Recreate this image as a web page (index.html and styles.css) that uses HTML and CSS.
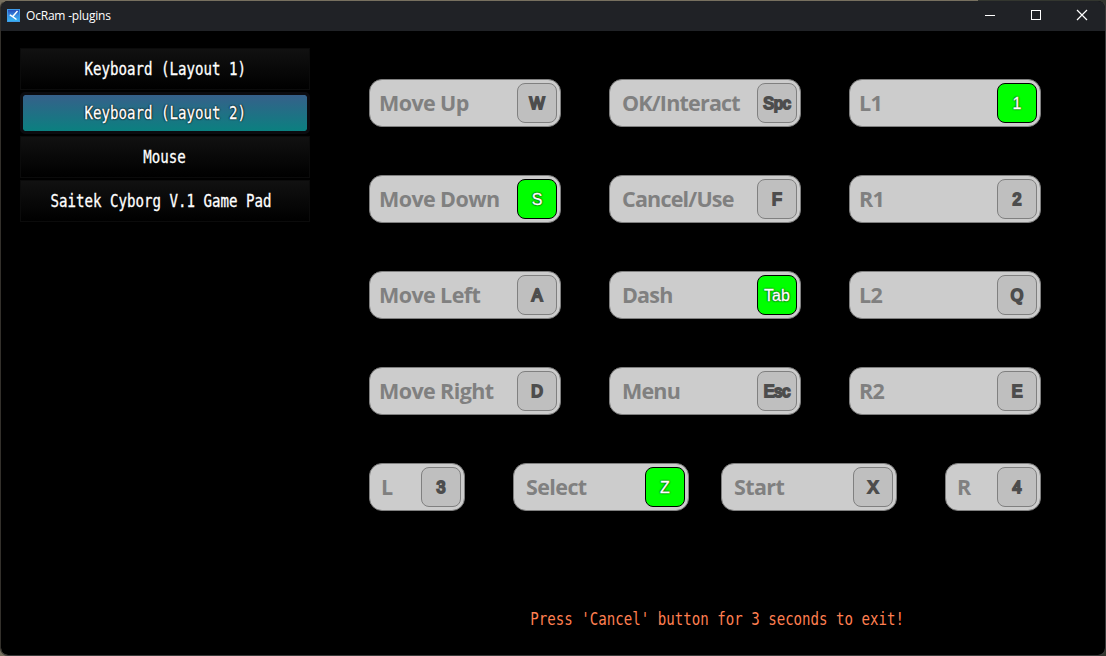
FILE: index.html
```
<!DOCTYPE html>
<html lang="en">
<head>
  <meta charset="UTF-8">
  <title>OcRam -plugins</title>
  <link rel="stylesheet" href="styles.css">
</head>
<body>

  <div class="window">
    <header class="titlebar">
      <svg class="app-icon" width="13" height="13" viewBox="0 0 13 13">
        <defs>
          <linearGradient id="iconFill" x1="0" y1="0" x2="0" y2="1">
            <stop offset="0" stop-color="#2448b8"/>
            <stop offset="0.5" stop-color="#3a8ce0"/>
            <stop offset="1" stop-color="#36b8f4"/>
          </linearGradient>
        </defs>
        <rect x="0.5" y="0.5" width="12" height="12" fill="url(#iconFill)" stroke="#3f9be8"/>
        <path d="M10.5 2L6 7.3M2.8 5.8L5.6 7.6L9.5 10.5" fill="none" stroke="#fff" stroke-width="1.4"/>
      </svg>
      <span class="title">OcRam -plugins</span>
      <div class="window-buttons">
        <svg width="46" height="30" viewBox="0 0 46 30"><path d="M18 14.5h10" stroke="#fff"/></svg>
        <svg width="46" height="30" viewBox="0 0 46 30"><rect x="18.5" y="9.5" width="9" height="9" fill="none" stroke="#fff"/></svg>
        <svg width="46" height="30" viewBox="0 0 46 30"><path d="M18 9l10 10M28 9l-10 10" stroke="#fff" stroke-width="1.2"/></svg>
      </div>
    </header>

    <main class="content">
      <nav class="devices">
        <div class="device"><span class="mono">Keyboard (Layout 1)</span></div>
        <div class="device selected"><span class="mono">Keyboard (Layout 2)</span></div>
        <div class="device"><span class="mono">Mouse</span></div>
        <div class="device pad"><span class="mono">Saitek Cyborg V.1 Game Pad</span></div>
      </nav>

      <section class="mapping">
        <div class="row">
          <div class="bind"><span class="label">Move Up</span><span class="key">W</span></div>
          <div class="bind inset"><span class="label">OK/Interact</span><span class="key">Spc</span></div>
          <div class="bind"><span class="label">L1</span><span class="key active">1</span></div>
        </div>
        <div class="row">
          <div class="bind"><span class="label">Move Down</span><span class="key active">S</span></div>
          <div class="bind inset"><span class="label">Cancel/Use</span><span class="key">F</span></div>
          <div class="bind"><span class="label">R1</span><span class="key">2</span></div>
        </div>
        <div class="row">
          <div class="bind"><span class="label">Move Left</span><span class="key">A</span></div>
          <div class="bind inset"><span class="label">Dash</span><span class="key active">Tab</span></div>
          <div class="bind"><span class="label">L2</span><span class="key">Q</span></div>
        </div>
        <div class="row">
          <div class="bind"><span class="label">Move Right</span><span class="key">D</span></div>
          <div class="bind inset"><span class="label">Menu</span><span class="key">Esc</span></div>
          <div class="bind"><span class="label">R2</span><span class="key">E</span></div>
        </div>
        <div class="row bottom">
          <div class="bind small"><span class="label">L</span><span class="key">3</span></div>
          <div class="bind medium"><span class="label">Select</span><span class="key active">Z</span></div>
          <div class="bind medium"><span class="label">Start</span><span class="key">X</span></div>
          <div class="bind small"><span class="label">R</span><span class="key">4</span></div>
        </div>
        <p class="hint"><span class="mono">Press 'Cancel' button for 3 seconds to exit!</span></p>
      </section>
    </main>
  </div>

</body>
</html>
```
FILE: styles.css
```
* {
  box-sizing: border-box;
}
body {
  margin: 0;
  height: 656px;
  overflow: hidden;
  background: linear-gradient(90deg, #77705f 978px, #33362f 978px);
}
.window {
  display: flex;
  flex-direction: column;
  height: 656px;
  border: 1px solid #3a3a3a;
  border-color: transparent #3a3a3a #3a3a3a #33302b;
  border-radius: 8px;
  background: #000;
  background-clip: padding-box;
  overflow: hidden;
}
.titlebar {
  display: flex;
  align-items: center;
  height: 30px;
  flex: none;
  padding-left: 6px;
  background: #202226;
}
.app-icon {
  margin: -1px 6px 0 0;
}
.title {
  margin-top: -1px;
  font: 12px "Open Sans", sans-serif;
  letter-spacing: -0.2px;
  color: #fff;
}
.window-buttons {
  display: flex;
  margin-left: auto;
}
.content {
  display: flex;
  flex: 1;
  padding: 17px 0 0 19px;
}
.mono {
  display: inline-block;
  font: 17px/20px "DejaVu Sans Mono", monospace;
  white-space: pre;
  transform: scaleX(0.83);
}
.devices {
  width: 290px;
}
.device {
  display: flex;
  align-items: center;
  justify-content: center;
  height: 42px;
  margin-bottom: 2px;
  border: 1px solid #0b0b0b;
  background: linear-gradient(#111, #000);
  color: #fff;
  -webkit-text-stroke: 0.3px #fff;
}
.device.selected {
  border: 3px solid #0b0b0f;
  background: linear-gradient(#36608a, #0b8080);
  background-clip: padding-box;
  border-radius: 5px;
  text-shadow: 0 0 2px #000, 0 0 2px #000, 0 0 1px #000;
}
.device.pad {
  padding-right: 8px;
}
.mapping {
  width: 672px;
  margin-left: 59px;
  padding-top: 31px;
}
.row {
  display: flex;
  gap: 48px;
  margin-bottom: 48px;
}
.row.bottom {
  gap: 0;
  justify-content: space-between;
}
.bottom .medium + .medium {
  margin-right: 16px;
}
.bottom .small + .medium {
  margin-left: 16px;
}
.bind {
  display: flex;
  align-items: center;
  justify-content: space-between;
  width: 192px;
  height: 48px;
  padding: 0 3px 0 9px;
  border: 1px solid #808080;
  border-radius: 13px;
  background: #ccc;
}
.bind.inset {
  padding-left: 12px;
}
.bind.small {
  width: 96px;
  padding-left: 11px;
}
.bind.medium {
  width: 176px;
  padding-left: 12px;
}
.label {
  font: bold 21.5px/30px "Open Sans", sans-serif;
  letter-spacing: -0.6px;
  white-space: nowrap;
  color: #808080;
}
.inset .label {
  letter-spacing: -0.8px;
}
.key {
  flex: none;
  width: 40px;
  height: 40px;
  border: 1px solid #808080;
  border-radius: 8px;
  background: #bfbfbf;
  font: 16px/40px "Liberation Sans", Arial, sans-serif;
  text-align: center;
  color: #4d4d4d;
  -webkit-text-stroke: 2px #4d4d4d;
}
.key.active {
  border-color: #000;
  background: #0f0;
  color: #fff;
  -webkit-text-stroke: 0.3px #fff;
  text-shadow: 0 0 2px #004000, 0 0 2px #004000, 0 0 1px #004000;
}
.hint {
  width: 372px;
  margin: 98px 0 0 162px;
  display: flex;
  justify-content: center;
  color: #ff7f50;
}
```
